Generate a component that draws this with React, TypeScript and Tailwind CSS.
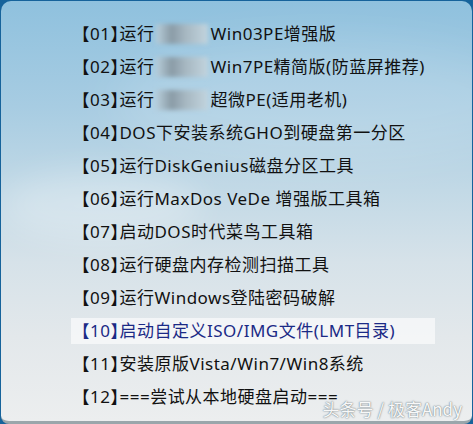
import React from 'react';

interface Item {
    no: string;
    head: string;
    blur?: boolean;
    tail?: string;
}

const items: Item[] = [
    { no: '01', head: '运行', blur: true, tail: 'Win03PE增强版' },
    { no: '02', head: '运行', blur: true, tail: 'Win7PE精简版(防蓝屏推荐)' },
    { no: '03', head: '运行', blur: true, tail: '超微PE(适用老机)' },
    { no: '04', head: 'DOS下安装系统GHO到硬盘第一分区' },
    { no: '05', head: '运行DiskGenius磁盘分区工具' },
    { no: '06', head: '运行MaxDos VeDe 增强版工具箱' },
    { no: '07', head: '启动DOS时代菜鸟工具箱' },
    { no: '08', head: '运行硬盘内存检测扫描工具' },
    { no: '09', head: '运行Windows登陆密码破解' },
    { no: '10', head: '启动自定义ISO/IMG文件(LMT目录)' },
    { no: '11', head: '安装原版Vista/Win7/Win8系统' },
    { no: '12', head: '===尝试从本地硬盘启动===' },
];

const font = { fontFamily: '"Noto Sans", "Noto Sans CJK SC", sans-serif' };
const bracket = { fontFamily: '"Noto Sans CJK SC", sans-serif', fontFeatureSettings: '"halt"' };

const App: React.FC = () => {
    return (
        <div className="w-[473px] h-[424px] bg-[#16639b] pt-[1px] px-[1px]">
            <div className="relative w-full h-[423px] rounded-t-[10px] rounded-b-[8px] overflow-hidden border-b-[3px] border-[#9aa6ab] bg-[linear-gradient(180deg,#8fc1de_0%,#a7cce2_25%,#c2d9e6_45%,#d6e2e9_62%,#e3e8eb_80%,#eceeef_100%)]">
                {/* soft light streaks of the sky picture */}
                <div className="absolute -right-[60px] top-[40px] w-[420px] h-[120px] rounded-[50%] bg-white/15 blur-xl" />
                <div className="absolute left-[0px] top-[170px] w-[200px] h-[70px] rounded-[50%] bg-white/25 blur-lg" />

                <div className="relative pt-[16px] pl-[70px] flex flex-col" style={font}>
                    {items.map((it) => {
                        const active = it.no === '10';
                        return (
                            <div key={it.no} className="h-[33px] flex items-center">
                                <div
                                    className={`h-[26px] w-[364px] flex items-center pl-[10px] text-[17px] tracking-[0.5px] whitespace-nowrap ${
                                        active ? 'bg-white/60 text-[#1b2a86]' : 'text-[#111]'
                                    }`}
                                >
                                    <span style={bracket}>【</span>
                                    <span>{it.no}</span>
                                    <span style={bracket}>】</span>
                                    <span>{it.head}</span>
                                    {it.blur && (
                                        <span className="inline-block w-[52px] h-[20px] mx-[2px] bg-[linear-gradient(90deg,#b9cfdc_0%,#8a9ba6_30%,#a5b6c0_55%,#c2d4de_100%)] blur-[2px]" />
                                    )}
                                    {it.tail && <span>{it.tail}</span>}
                                </div>
                            </div>
                        );
                    })}
                </div>

                <div
                    className="absolute right-[10px] bottom-[0px] text-[17px] text-white/95 [text-shadow:0_0_2px_#7d8a90,0_0_1px_#7d8a90]"
                    style={{ fontFamily: '"Noto Sans CJK SC", "Noto Sans", sans-serif' }}
                >
                    头条号 / 极客Andy
                </div>
            </div>
        </div>
    );
};

export default App;
